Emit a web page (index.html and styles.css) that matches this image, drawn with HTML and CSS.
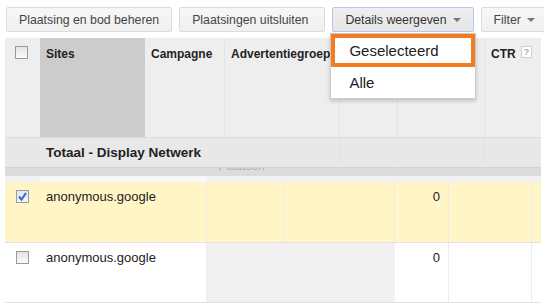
FILE: index.html
```html
<!DOCTYPE html>
<html lang="nl">
<head>
    <meta charset="UTF-8">
    <title>Plaatsingen</title>
    <link rel="stylesheet" href="styles.css">
</head>
<body>
    <div class="page">
        <div class="toolbar">
            <a href="javascript:" class="btn">Plaatsing en bod beheren</a>
            <a href="javascript:" class="btn btn-wide">Plaatsingen uitsluiten</a>
            <div class="btn-wrap">
                <a href="javascript:" class="btn btn-active">Details weergeven <span class="caret"></span></a>
                <ul class="menu">
                    <li class="menu-item menu-item-hl">Geselecteerd</li>
                    <li class="menu-item">Alle</li>
                </ul>
            </div>
            <a href="javascript:" class="btn">Filter <span class="caret"></span></a>
        </div>

        <div class="grid">
            <div class="head">
                <div class="cell cell-check"><span class="box"></span></div>
                <div class="cell cell-sorted">Sites</div>
                <div class="cell">Campagne</div>
                <div class="cell cell-clip">Advertentiegroep</div>
                <div class="cell"></div>
                <div class="cell"></div>
                <div class="cell">CTR <span class="help">?</span></div>
            </div>

            <div class="total">
                <div class="cell"></div>
                <div class="cell total-label">Totaal - Display Netwerk</div>
                <div class="cell"></div>
                <div class="cell"></div>
                <div class="cell"></div>
            </div>
            <div class="strip"><span class="strip-text">Plaatsen</span></div>
            <div class="strip-light"></div>

            <div class="row row-selected">
                <div class="cell cell-check">
                    <span class="box box-on">
                        <svg width="11" height="11" viewBox="0 0 11 11"><path d="M2 5.5 L4.5 8.5 L9 2" fill="none" stroke="#3366cc" stroke-width="2"/></svg>
                    </span>
                </div>
                <div class="cell">anonymous.google</div>
                <div class="cell"></div>
                <div class="cell"></div>
                <div class="cell cell-num">0</div>
                <div class="cell"></div>
                <div class="cell"></div>
            </div>
            <div class="row">
                <div class="cell cell-check"><span class="box"></span></div>
                <div class="cell">anonymous.google</div>
                <div class="cell cell-off"></div>
                <div class="cell cell-off"></div>
                <div class="cell cell-num">0</div>
                <div class="cell"></div>
                <div class="cell"></div>
            </div>
        </div>
    </div>
</body>
</html>
```

FILE: styles.css
```css
*{
    margin:0;
    padding:0;
    text-decoration:none;
    box-sizing:border-box;
}

body{
    font-family:"Liberation Sans", Arial, sans-serif;
    font-size:13px;
    color:#222;
    background:#fff;
}

.page{
    padding:7px 3px 0 5px;
    width:544px;
}

/* knoppenbalk */
.toolbar{
    display:flex;
    gap:7px;
    height:25px;
    padding-left:1px;
}

.btn{
    display:flex;
    align-items:center;
    height:25px;
    padding:0 12px;
    border:1px solid #dcdcdc;
    border-radius:2px;
    background:linear-gradient(#f7f7f7, #f0f0f0);
    color:#444;
    font-size:12.3px;
    white-space:nowrap;
}

.btn-wide{
    padding-right:16px;
}

.btn-active{
    border-color:#b8c8e8;
    background:linear-gradient(#eeeeee, #e6e6e6);
    color:#333;
}

.btn-wrap{
    position:relative;
}

.caret{
    display:inline-block;
    margin-left:6px;
    border-left:4px solid transparent;
    border-right:4px solid transparent;
    border-top:4px solid #777;
}

.menu{
    position:absolute;
    left:-2px;
    top:26px;
    width:146px;
    list-style:none;
    background:#fff;
    border:1px solid #ccc;
    box-shadow:0 2px 4px rgba(0,0,0,.2);
    z-index:3;
}

.menu-item{
    height:31px;
    line-height:31px;
    padding-left:18px;
    font-size:15px;
    color:#222;
}

.menu-item-hl{
    height:33px;
    line-height:25px;
    border:4px solid #f47c20;
    padding-left:14px;
}

/* tabel */
.grid{
    margin-top:6px;
    width:536px;
}

.head, .row{
    display:grid;
}

.head{
    grid-template-columns:35px 105px 80px 115px 58px 87px 56px;
    height:100px;
    background:#eeeeee;
    border-bottom:1px solid #dadada;
    font-size:12px;
    font-weight:bold;
}

.cell{
    padding:8px 6px 0;
    line-height:16px;
    border-right:1px solid #e4e4e4;
    overflow:hidden;
    white-space:nowrap;
}

.cell:last-child{
    border-right:none;
}

.cell-sorted{
    background:#cccccc;
    border-right:none;
}

.cell-check{
    padding:8px 0 0 10px;
    border-right:none;
}

.box{
    display:block;
    width:13px;
    height:13px;
    border:1px solid #9a9a9a;
    background:linear-gradient(#e4e4e4, #fafafa);
}

.box-on{
    background:linear-gradient(#dde6f4, #f5f8fc);
}

.box-on svg{
    display:block;
}

.help{
    display:inline-block;
    width:11px;
    height:12px;
    margin-left:2px;
    border:1px solid #cfcfcf;
    background:#fff;
    color:#aaa;
    font-size:9px;
    line-height:10px;
    text-align:center;
    vertical-align:top;
}

.total{
    display:grid;
    grid-template-columns:35px 300px 58px 87px 56px;
    height:30px;
    background:#e8e8e8;
    border-bottom:1px solid #d2d2d2;
}

.total .cell{
    padding-top:0;
    line-height:29px;
}

.total .cell:first-child{
    border-right:none;
}

.total-label{
    font-weight:bold;
    font-size:13.5px;
}

.strip{
    height:8px;
    background:#dcdcdc;
    overflow:hidden;
}

.strip-text{
    display:block;
    margin:-9px 0 0 213px;
    font-size:12px;
    line-height:14px;
    color:#a6b0c2;
}

.strip-light{
    height:6px;
    background:linear-gradient(90deg, #f2f2f2 35px, #f8f8f8 35px, #f8f8f8 202px, #f1f1f1 202px);
}

.row{
    grid-template-columns:35px 167px 77px 111px 54px 83px 9px;
    height:60px;
    border-bottom:1px solid #e3e3e3;
}

.row .cell{
    padding-top:7px;
    border-right-color:#ececec;
}

.row .cell-check{
    padding:8px 0 0 11px;
}

.row-selected{
    background:#fff5c6;
    height:61px;
}

.cell-off{
    background:#f1f1f1;
    border-right:none;
}

.cell-num{
    text-align:right;
    padding-right:8px;
}
```
